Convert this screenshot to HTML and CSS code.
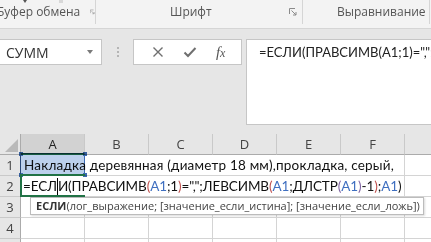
FILE: index.html
```html
<!DOCTYPE html>
<html lang="ru">
<head>
  <meta charset="UTF-8">
  <title>Книга1 - Excel</title>
  <link rel="stylesheet" href="styles.css">
</head>
<body>
  <div class="ribbon">
    <div class="group group-clipboard">
      <span class="tick tick-dark"></span>
      <span class="tick tick-light"></span>
      <span class="group-label">Буфер обмена</span>
      <svg class="launcher" width="8" height="8" viewBox="0 0 8 8">
        <path d="M0.5 6V0.5H6" fill="none" stroke="#8a8a8a"/>
        <path d="M2.5 2.5L7 7M7 4V7H4" fill="none" stroke="#8a8a8a"/>
      </svg>
    </div>
    <div class="group group-font">
      <span class="group-label">Шрифт</span>
      <svg class="launcher" width="8" height="8" viewBox="0 0 8 8">
        <path d="M0.5 6V0.5H6" fill="none" stroke="#8a8a8a"/>
        <path d="M2.5 2.5L7 7M7 4V7H4" fill="none" stroke="#8a8a8a"/>
      </svg>
    </div>
    <div class="group group-align">
      <span class="group-label">Выравнивание</span>
    </div>
  </div>

  <div class="formula-area">
    <div class="name-box">
      <span>СУММ</span>
      <span class="name-arrow"></span>
    </div>
    <div class="grip"><i></i><i></i><i></i></div>
    <div class="fx-box">
      <svg width="12" height="12" viewBox="0 0 12 12">
        <path d="M1.5 1.5L10.5 10.5M10.5 1.5L1.5 10.5" stroke="#6f6f6f" stroke-width="1.4"/>
      </svg>
      <svg width="14" height="12" viewBox="0 0 14 12">
        <path d="M1.5 6.5L5 10L12.5 2" fill="none" stroke="#6f6f6f" stroke-width="2"/>
      </svg>
      <span class="fx">f<span class="fx-x">x</span></span>
    </div>
    <div class="formula-input">=ЕСЛИ(ПРАВСИМВ(A1;1)=",";ЛЕВСИМВ(A1;ДЛСТР(A1)-1);A1)</div>
  </div>

  <div class="sheet">
    <div class="corner"><span class="corner-mark"></span></div>
    <div class="col-head col-active">A</div>
    <div class="col-head">B</div>
    <div class="col-head">C</div>
    <div class="col-head">D</div>
    <div class="col-head">E</div>
    <div class="col-head">F</div>
    <div class="col-head col-rest"></div>

    <div class="row-head">1</div>
    <div class="cell cell-wide cell-text">Накладка деревянная (диаметр 18 мм),прокладка, серый,</div>
    <div class="cell cell-rest"></div>

    <div class="row-head">2</div>
    <div class="cell cell-wide cell-formula">=ЕСЛ<span class="caret"></span>И(ПРАВСИМВ<span class="p2">(</span><span class="ref">A1</span>;1<span class="p2">)</span>=",";ЛЕВСИМВ<span class="p2">(</span><span class="ref">A1</span>;ДЛСТР<span class="p3">(</span><span class="ref">A1</span><span class="p3">)</span>-1<span class="p2">)</span>;<span class="ref">A1</span>)</div>
    <div class="cell cell-rest"></div>

    <div class="row-head">3</div>
    <div class="cell"></div><div class="cell"></div><div class="cell"></div>
    <div class="cell"></div><div class="cell"></div><div class="cell"></div>
    <div class="cell cell-rest"></div>

    <div class="row-head">4</div>
    <div class="cell"></div><div class="cell"></div><div class="cell"></div>
    <div class="cell"></div><div class="cell"></div><div class="cell"></div>
    <div class="cell cell-rest"></div>

    <div class="row-head">5</div>
    <div class="cell"></div><div class="cell"></div><div class="cell"></div>
    <div class="cell"></div><div class="cell"></div><div class="cell"></div>
    <div class="cell cell-rest"></div>

    <!-- range picked by the formula, and the cell being edited -->
    <div class="ref-box">
      <i class="handle h-tl"></i><i class="handle h-tr"></i>
      <i class="handle h-bl"></i><i class="handle h-br"></i>
    </div>
    <div class="active-cell"></div>

    <div class="tooltip"><b>ЕСЛИ</b>(лог_выражение; [значение_если_истина]; [значение_если_ложь])</div>
  </div>
</body>
</html>
```

FILE: styles.css
```css
* {
  margin: 0;
  padding: 0;
  box-sizing: border-box;
}

html,
body {
  width: 431px;
  height: 242px;
  overflow: hidden;
}

body {
  font-family: 'Open Sans', 'Noto Sans', sans-serif;
  background: #e6e6e6;
  color: #444;
}

/* ribbon bottom strip */

.ribbon {
  height: 29px;
  background: #f3f3f3;
  border-bottom: 1px solid #d5d5d5;
  display: flex;
  overflow: hidden;
}

.group {
  position: relative;
  display: flex;
  align-items: flex-end;
  padding-bottom: 4px;
  border-right: 1px solid #d5d5d5;
  height: 24px;
  flex-shrink: 0;
}

.group-label {
  font-size: 12px;
  line-height: 16px;
  color: #555;
  white-space: nowrap;
}

.group-clipboard {
  width: 99px;
  margin-left: -3px;
}

.group-clipboard .group-label {
  margin-right: 10px;
}

.group-font {
  width: 207px;
}

.group-font .group-label {
  margin-left: 74px;
}

.group-align {
  width: 127px;
  padding-left: 34px;
}

.launcher {
  margin-bottom: 4px;
}

.group-font .launcher {
  position: absolute;
  right: 5px;
  bottom: 4px;
}

.tick {
  position: absolute;
  top: 0;
  height: 3px;
}

.tick-dark {
  left: 26px;
  width: 0;
  border-top: 3px solid #555;
  border-left: 2px solid transparent;
  border-right: 2px solid transparent;
}

.tick-light {
  left: 62px;
  width: 4px;
  background: #d8d8d8;
}

/* name box and formula bar */

.formula-area {
  height: 105px;
  display: flex;
  align-items: flex-start;
  padding-top: 10px;
}

.name-box {
  width: 102px;
  height: 26px;
  background: #fff;
  border: 1px solid #c6c6c6;
  border-left: none;
  display: flex;
  align-items: center;
  justify-content: space-between;
  padding: 0 8px 0 6px;
  font-size: 14px;
  color: #333;
}

.name-arrow {
  width: 0;
  height: 0;
  border-top: 4px solid #7a7a7a;
  border-left: 3.5px solid transparent;
  border-right: 3.5px solid transparent;
}

.grip {
  width: 31px;
  height: 26px;
  display: flex;
  flex-direction: column;
  align-items: center;
  justify-content: center;
  gap: 2px;
}

.grip i {
  width: 2px;
  height: 2px;
  background: #b5b5b5;
}

.fx-box {
  width: 109px;
  height: 26px;
  background: #fff;
  border: 1px solid #c6c6c6;
  display: flex;
  align-items: center;
  justify-content: space-around;
  padding: 0 6px 0 8px;
}

.fx {
  font-family: 'Liberation Serif', serif;
  font-style: italic;
  font-size: 15px;
  color: #555;
}

.fx-x {
  font-size: 12px;
}

.formula-input {
  margin-left: 4px;
  flex: 1;
  min-width: 0;
  height: 86px;
  background: #fff;
  border: 1px solid #c6c6c6;
  border-right: none;
  padding: 4px 0 0 12px;
  font-family: 'Lato', 'Liberation Sans', sans-serif;
  font-size: 13px;
  color: #222;
  white-space: nowrap;
  overflow: hidden;
}

/* sheet */

.sheet {
  position: relative;
  height: 108px;
  overflow: hidden;
  display: grid;
  grid-template-columns: 21px repeat(6, 64px) 1fr;
  grid-template-rows: repeat(6, 21px);
  font-family: 'Lato', 'Liberation Sans', sans-serif;
  font-size: 13.5px;
}

.corner {
  border-right: 1px solid #ababab;
  border-bottom: 1px solid #ababab;
  position: relative;
}

.corner-mark {
  position: absolute;
  right: 2px;
  bottom: 2px;
  width: 0;
  height: 0;
  border-left: 13px solid transparent;
  border-bottom: 13px solid #b9b9b9;
}

.col-head {
  border-right: 1px solid #c9c9c9;
  border-bottom: 1px solid #ababab;
  display: flex;
  align-items: center;
  justify-content: center;
  color: #444;
  font-family: 'Open Sans', sans-serif;
  font-size: 13px;
}

.col-active {
  background: #d2d2d2;
  border-bottom: 2px solid #217346;
  color: #222;
}

.col-rest {
  border-right: none;
}

.row-head {
  border-right: 1px solid #ababab;
  border-bottom: 1px solid #c9c9c9;
  display: flex;
  align-items: center;
  justify-content: center;
  font-family: 'Open Sans', sans-serif;
  font-size: 13px;
  color: #444;
}

.cell {
  background: #fff;
  border-right: 1px solid #d4d4d4;
  border-bottom: 1px solid #d4d4d4;
}

.cell-wide {
  grid-column: span 6;
  padding-left: 2px;
  line-height: 20px;
  white-space: nowrap;
  overflow: hidden;
  color: #111;
}

.cell-text {
  padding-left: 3px;
  letter-spacing: 0.2px;
}

.cell-formula {
  letter-spacing: -0.1px;
}

.cell-rest {
  border-right: none;
}

.caret {
  display: inline-block;
  width: 0;
  height: 17px;
  border-left: 1px solid #000;
  vertical-align: -4px;
}

.ref {
  color: #3f6fc0;
}

.p2 {
  color: #c0504d;
}

.p3 {
  color: #8064a2;
}

.ref-box {
  position: absolute;
  left: 20px;
  top: 19px;
  width: 65px;
  height: 22px;
  border: 1px solid #3d6bb3;
  background: #bcd0ec;
  mix-blend-mode: multiply;
}

.handle {
  position: absolute;
  width: 4px;
  height: 4px;
  background: #3d6bb3;
}

.h-tl { left: -2px; top: -2px; }
.h-tr { right: -3px; top: -2px; }
.h-bl { left: -2px; bottom: -3px; }
.h-br { right: -3px; bottom: -3px; }

.active-cell {
  position: absolute;
  left: 20px;
  top: 40px;
  width: 65px;
  height: 23px;
  border: 2px solid #217346;
  border-right: none;
}

.tooltip {
  position: absolute;
  left: 30px;
  top: 63px;
  height: 18px;
  background: #fff;
  border: 1px solid #bcbcbc;
  box-shadow: 1px 1px 2px rgba(0, 0, 0, 0.15);
  padding: 0 3px 0 5px;
  font-family: 'Open Sans', 'Noto Sans', sans-serif;
  font-size: 11px;
  line-height: 16px;
  color: #444;
  white-space: nowrap;
}

.tooltip b {
  color: #333;
}
```
